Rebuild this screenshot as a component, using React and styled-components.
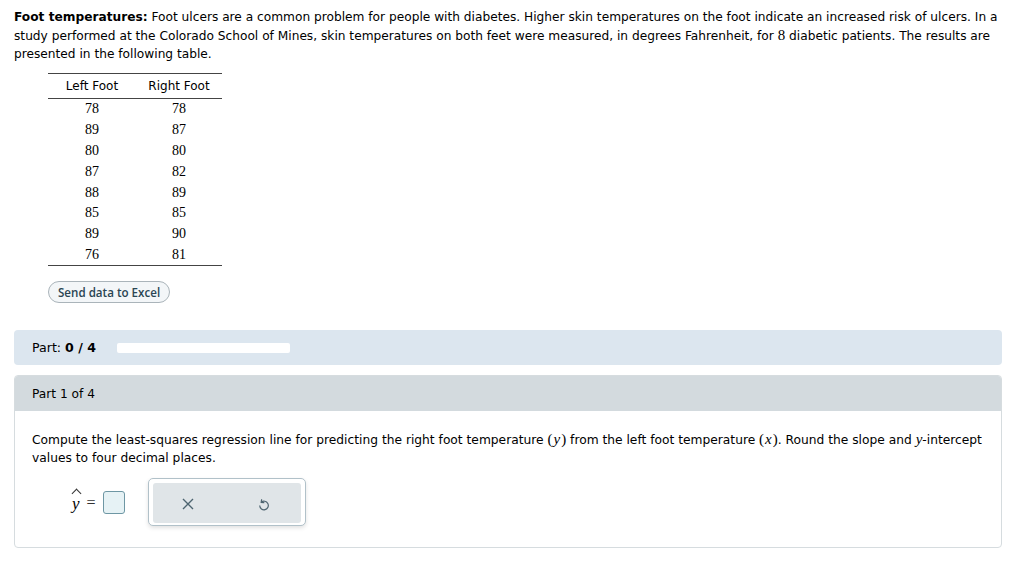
import styled, { createGlobalStyle } from "styled-components";

const Global = createGlobalStyle`
  body {
    margin: 0;
    background: #fff;
    font-family: Verdana, "DejaVu Sans", sans-serif;
    color: #000;
  }
`;

const Page = styled.div`
  width: 988px;
  padding: 8px 0 0 14px;
`;

const Intro = styled.p`
  margin: 0;
  font-size: 12.2px;
  line-height: 18px;
  width: 990px;
`;

const Serif = styled.span`
  font-family: "Liberation Serif", serif;
  font-size: 15px;
  font-style: ${({ $italic }) => ($italic ? "italic" : "normal")};
  i {
    font-style: italic;
    padding: 0 1px;
  }
`;

const Table = styled.table`
  margin: 10px 0 0 34px;
  border-collapse: collapse;
  border-top: 1px solid #444;
  border-bottom: 1px solid #444;
  width: 174px;
`;

const Th = styled.th`
  font-weight: normal;
  font-size: 12px;
  height: 24px;
  border-bottom: 1px solid #444;
  padding: 0;
  width: ${({ $w }) => $w}px;
`;

const Td = styled.td`
  font-family: "Liberation Serif", serif;
  font-size: 14px;
  text-align: center;
  height: 20.8px;
  padding: 0;
`;

const ExcelButton = styled.button`
  display: block;
  margin: 15px 0 0 34px;
  height: 22px;
  padding: 0 9px;
  border: 1px solid #aab4ba;
  border-radius: 11px;
  background: #f3f6f8;
  color: #2a4553;
  font-family: "Open Sans", "Liberation Sans", sans-serif;
  font-size: 11.6px;
  font-weight: 600;
`;

const PartBar = styled.div`
  margin-top: 27px;
  height: 35px;
  border-radius: 4px;
  background: #dce6ef;
  display: flex;
  align-items: center;
  padding-left: 18px;
  gap: 21px;
  font-size: 12.6px;
`;

const Progress = styled.div`
  width: 173px;
  height: 10px;
  background: #fff;
  border-radius: 2px;
`;

const Card = styled.div`
  margin-top: 10px;
  border: 1px solid #d6dcdf;
  border-radius: 4px;
  overflow: hidden;
`;

const CardHead = styled.div`
  height: 35px;
  background: #d3dade;
  display: flex;
  align-items: center;
  padding-left: 17px;
  font-size: 12.2px;
`;

const CardBody = styled.div`
  padding: 19px 8px 21px 17px;
  font-size: 12.25px;
  line-height: 18px;
`;

const AnswerRow = styled.div`
  display: flex;
  align-items: center;
  margin-top: 11px;
  padding-left: 40px;
`;

const Hat = styled.span`
  position: relative;
  display: inline-block;
  font-family: "Liberation Serif", serif;
  font-style: italic;
  font-size: 17px;
  line-height: 18px;
  margin-top: 4px;
  &::before {
    content: "";
    position: absolute;
    left: 1px;
    top: -5px;
    width: 6px;
    height: 6px;
    border-left: 1px solid #333;
    border-top: 1px solid #333;
    transform: rotate(45deg);
  }
`;

const Eq = styled.span`
  font-family: "Liberation Serif", serif;
  font-size: 16px;
  margin: 2px 7px 0 7px;
  color: #333;
`;

const InputBox = styled.div`
  width: 20px;
  height: 21px;
  border: 1px solid #6e97a4;
  border-radius: 3px;
  background: #e6f2f5;
`;

const ToolPanel = styled.div`
  margin-left: 23px;
  width: 148px;
  height: 38px;
  padding: 4px;
  border: 1px solid #b1c1c9;
  border-radius: 5px;
  box-shadow: 0 2px 4px rgba(0, 0, 0, 0.12);
  background: #fff;
`;

const ToolInner = styled.div`
  height: 100%;
  background: #e0e5e8;
  border-radius: 3px;
  display: flex;
  align-items: center;
  justify-content: space-between;
  padding: 2px 31px 0 29px;
  color: #4d6470;
`;

const rows = [
  [78, 78],
  [89, 87],
  [80, 80],
  [87, 82],
  [88, 89],
  [85, 85],
  [89, 90],
  [76, 81],
];

export default function App() {
  return (
    <Page>
      <Global />
      <Intro>
        <b>Foot temperatures:</b> Foot ulcers are a common problem for people
        with diabetes. Higher skin temperatures on the foot indicate an
        increased risk of ulcers. In a study performed at the Colorado School of
        Mines, skin temperatures on both feet were measured, in degrees
        Fahrenheit, for <Serif>8</Serif> diabetic patients. The results are
        presented in the following table.
      </Intro>
      <Table>
        <thead>
          <tr>
            <Th $w={88}>Left Foot</Th>
            <Th $w={86}>Right Foot</Th>
          </tr>
        </thead>
        <tbody>
          {rows.map(([l, r], i) => (
            <tr key={i}>
              <Td>{l}</Td>
              <Td>{r}</Td>
            </tr>
          ))}
        </tbody>
      </Table>
      <ExcelButton>Send data to Excel</ExcelButton>
      <PartBar>
        <span>
          Part: <b>0 / 4</b>
        </span>
        <Progress />
      </PartBar>
      <Card>
        <CardHead>Part 1 of 4</CardHead>
        <CardBody>
          Compute the least-squares regression line for predicting the right
          foot temperature{" "}
          <Serif>
            (<i>y</i>)
          </Serif>{" "}
          from the left foot temperature{" "}
          <Serif>
            (<i>x</i>)
          </Serif>
          . Round the slope and <Serif $italic>y</Serif>-intercept values to
          four decimal places.
          <AnswerRow>
            <Hat>y</Hat>
            <Eq>=</Eq>
            <InputBox />
            <ToolPanel>
              <ToolInner>
                <svg width="12" height="12" viewBox="0 0 12 12">
                  <path
                    d="M1 1L11 11M11 1L1 11"
                    stroke="currentColor"
                    strokeWidth="1.4"
                  />
                </svg>
                <svg width="12" height="13" viewBox="0 0 12 13">
                  <path
                    d="M3.2 4.2A4.3 4.3 0 1 1 1.7 7.6"
                    fill="none"
                    stroke="currentColor"
                    strokeWidth="1.2"
                  />
                  <path
                    d="M3.6 1.2L3.2 4.4L6.3 4.6"
                    fill="none"
                    stroke="currentColor"
                    strokeWidth="1.2"
                  />
                </svg>
              </ToolInner>
            </ToolPanel>
          </AnswerRow>
        </CardBody>
      </Card>
    </Page>
  );
}
